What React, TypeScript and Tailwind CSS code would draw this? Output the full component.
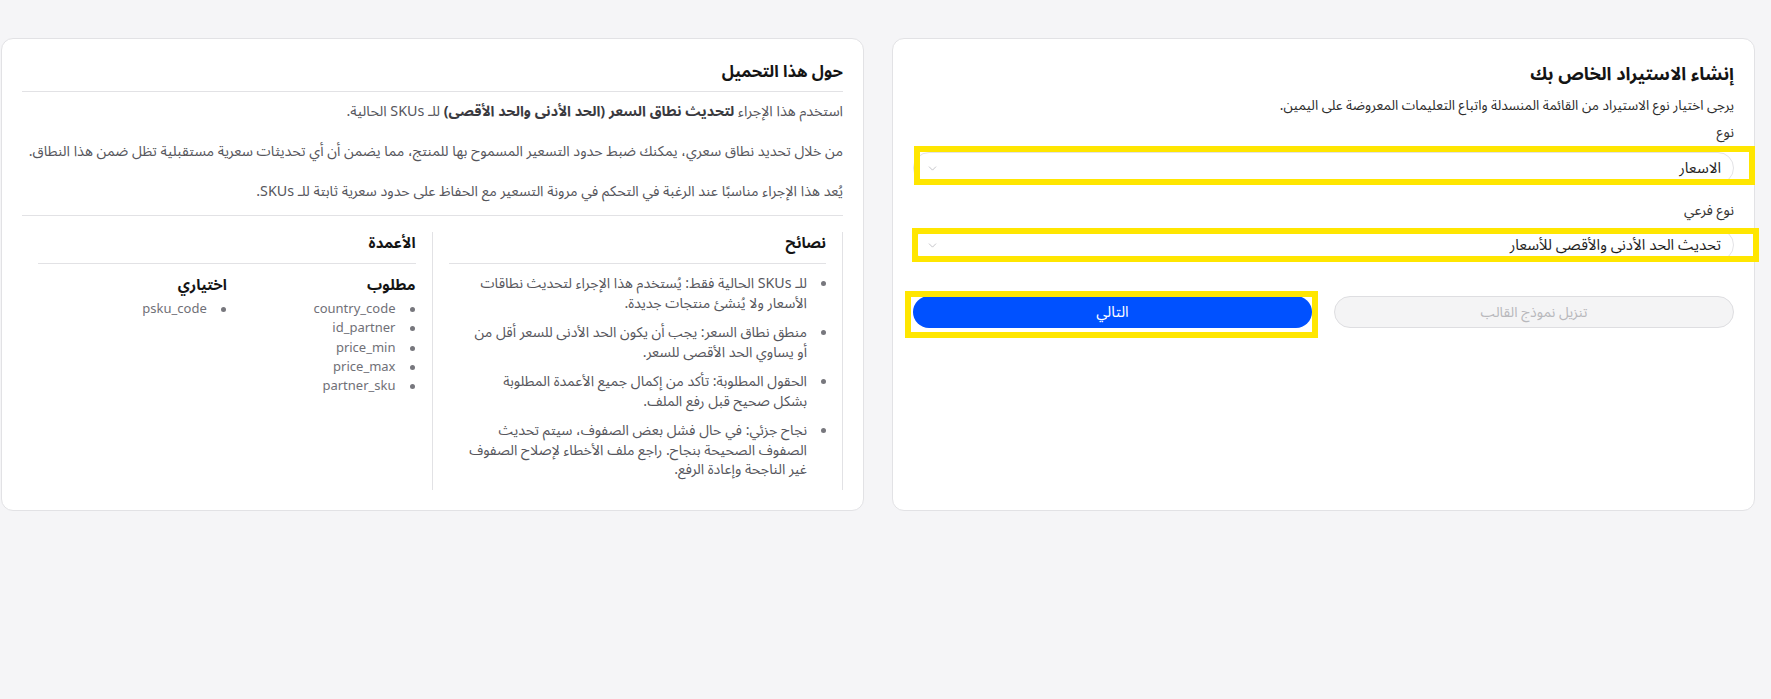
import { ChevronDown } from "lucide-react";

const tips = [
  "للـ SKUs الحالية فقط: يُستخدم هذا الإجراء لتحديث نطاقات الأسعار ولا يُنشئ منتجات جديدة.",
  "منطق نطاق السعر: يجب أن يكون الحد الأدنى للسعر أقل من أو يساوي الحد الأقصى للسعر.",
  "الحقول المطلوبة: تأكد من إكمال جميع الأعمدة المطلوبة بشكل صحيح قبل رفع الملف.",
  "نجاح جزئي: في حال فشل بعض الصفوف، سيتم تحديث الصفوف الصحيحة بنجاح. راجع ملف الأخطاء لإصلاح الصفوف غير الناجحة وإعادة الرفع.",
];

const required = ["country_code", "id_partner", "price_min", "price_max", "partner_sku"];
const optional = ["psku_code"];

function Dot() {
  return <span className="mt-[7px] h-[5px] w-[5px] shrink-0 rounded-full bg-[#77777d]" />;
}

function Select({ value }: { value: string }) {
  return (
    <div className="flex h-[32px] items-center justify-between rounded-full border border-[#e3e3e6] bg-white px-3">
      <span className="text-[15px] text-[#1e1e1e]">{value}</span>
      <ChevronDown size={13} strokeWidth={1.3} className="text-[#aeaeb3]" />
    </div>
  );
}

function ImportCard() {
  return (
    <div className="flex-1 rounded-xl border border-[#e2e2e5] bg-white px-5 pt-[21px]">
      <h2 className="text-[18px] leading-[28px] font-bold text-[#141414]">
        إنشاء الاستيراد الخاص بك
      </h2>
      <p className="mt-[8px] text-[13.6px] leading-[20px] text-[#2c2c2c]">
        يرجى اختيار نوع الاستيراد من القائمة المنسدلة واتباع التعليمات المعروضة على اليمين.
      </p>

      <label className="mt-[7px] block text-[14px] leading-[20px] text-[#333]">نوع</label>
      <div className="relative mt-[9px]">
        <Select value="الاسعار" />
        <div className="pointer-events-none absolute top-[-6px] right-[-21px] bottom-[-1px] left-px border-[6px] border-[#ffe600]" />
      </div>

      <label className="mt-[17px] block text-[14px] leading-[20px] text-[#333]">نوع فرعي</label>
      <div className="relative mt-2">
        <Select value="تحديث الحد الأدنى والأقصى للأسعار" />
        <div className="pointer-events-none absolute top-[-1px] right-[-25px] bottom-[-1px] left-[-1px] border-[6px] border-[#ffe600]" />
      </div>

      <div className="mt-[35px] flex gap-[22px]">
        <button className="h-[32px] w-[400px] rounded-full border border-[#dedee1] bg-[#f4f4f5] text-[14px] text-[#b8b8bc]">
          تنزيل نموذج القالب
        </button>
        <div className="relative flex-1">
          <button className="h-[32px] w-full rounded-full bg-[#0051ff] text-[15px] text-white">
            التالي
          </button>
          <div className="pointer-events-none absolute top-[-5px] right-[-6px] bottom-[-10px] left-[-8px] border-[6px] border-[#ffe600]" />
        </div>
      </div>
    </div>
  );
}

function AboutCard() {
  return (
    <div className="flex-1 rounded-xl border border-[#e2e2e5] bg-white px-5 pt-5 pb-5">
      <h2 className="border-b border-[#e2e2e5] pb-[6px] text-[16.5px] leading-[26px] font-bold text-[#141414]">
        حول هذا التحميل
      </h2>
      <div className="mt-2 flex flex-col gap-4 border-b border-[#e2e2e5] pb-[11px] text-[14.3px] leading-[24px] text-[#56565c]">
        <p>
          استخدم هذا الإجراء{" "}
          <strong className="font-bold text-[#3a3a3f]">
            لتحديث نطاق السعر (الحد الأدنى والحد الأقصى)
          </strong>{" "}
          للـ SKUs الحالية.
        </p>
        <p>
          من خلال تحديد نطاق سعري، يمكنك ضبط حدود التسعير المسموح بها للمنتج، مما يضمن أن أي
          تحديثات سعرية مستقبلية تظل ضمن هذا النطاق.
        </p>
        <p>
          يُعد هذا الإجراء مناسبًا عند الرغبة في التحكم في مرونة التسعير مع الحفاظ على حدود سعرية
          ثابتة للـ SKUs.
        </p>
      </div>

      <div className="mt-4 grid grid-cols-2">
        <div className="border-r border-[#e2e2e5] px-4 pb-[10px]">
          <h3 className="border-b border-[#e2e2e5] pb-[9px] text-[15px] leading-[22px] font-bold text-[#141414]">
            نصائح
          </h3>
          <ul className="mt-[10px] flex flex-col gap-[10px] pl-[18px] text-[14.2px] leading-[19.5px] text-[#56565c]">
            {tips.map((t) => (
              <li key={t} className="flex gap-[14px]">
                <Dot />
                <span>{t}</span>
              </li>
            ))}
          </ul>
        </div>

        <div className="border-r border-[#e2e2e5] px-4">
          <h3 className="border-b border-[#e2e2e5] pb-[9px] text-[15px] leading-[22px] font-bold text-[#141414]">
            الأعمدة
          </h3>
          <div className="mt-[10px] grid grid-cols-2">
            {[
              { title: "مطلوب", items: required },
              { title: "اختياري", items: optional },
            ].map((col) => (
              <div key={col.title}>
                <h4 className="text-[15px] leading-[22px] font-bold text-[#141414]">{col.title}</h4>
                <ul className="mt-[4px] flex flex-col text-[13px] leading-[19.3px] text-[#707077]">
                  {col.items.map((c) => (
                    <li key={c} className="flex gap-[14px] pr-px">
                      <Dot />
                      <span>{c}</span>
                    </li>
                  ))}
                </ul>
              </div>
            ))}
          </div>
        </div>
      </div>
    </div>
  );
}

export default function App() {
  return (
    <div
      dir="rtl"
      className="min-h-screen bg-[#f5f5f7] pt-[38px] pr-4 pl-px font-['Noto_Sans_Arabic','Noto_Sans','DejaVu_Sans',sans-serif]"
    >
      <div className="flex items-stretch gap-7">
        <ImportCard />
        <AboutCard />
      </div>
    </div>
  );
}
